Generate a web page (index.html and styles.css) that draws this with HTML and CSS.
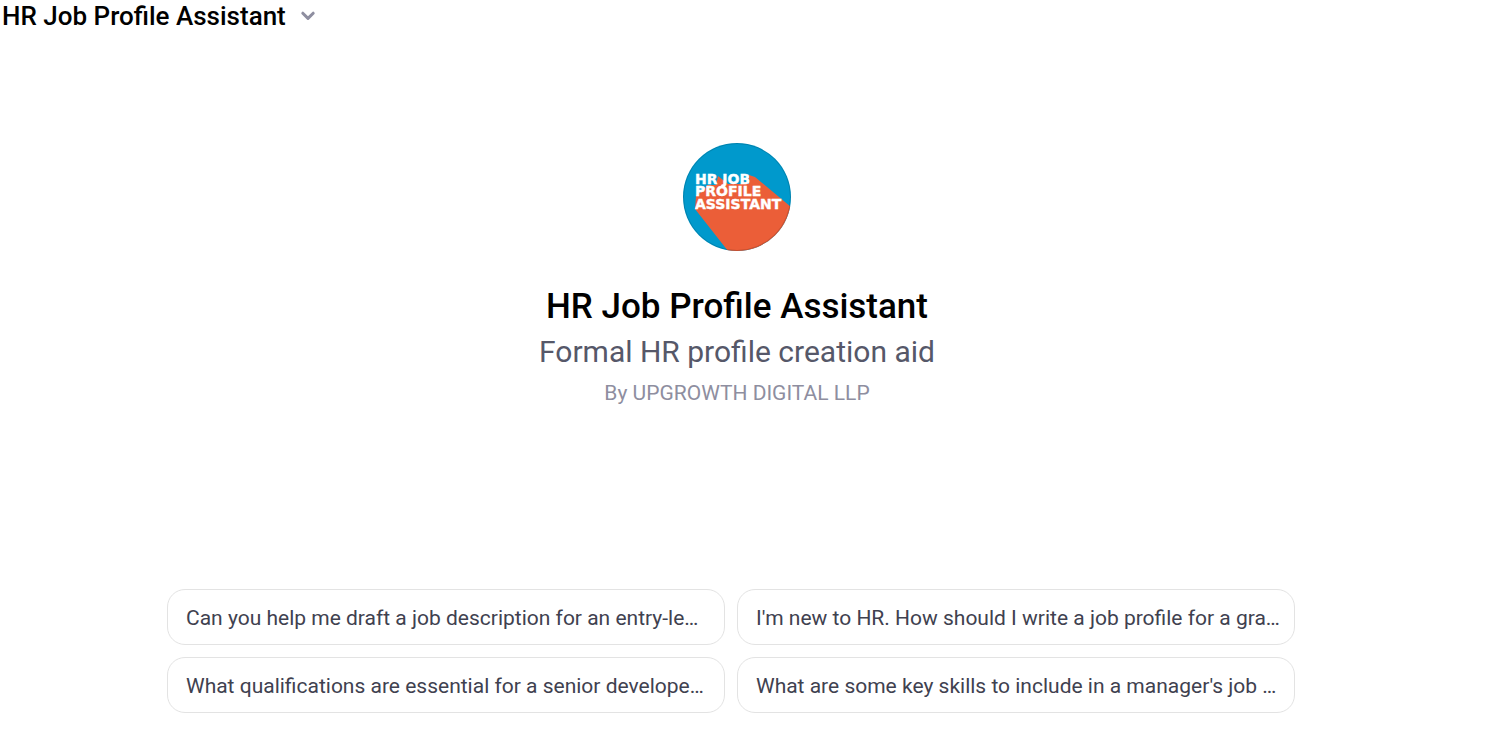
FILE: index.html
```html
<!DOCTYPE html>
<html lang="en">
<head>
    <meta charset="UTF-8">
    <meta name="viewport" content="width=device-width, initial-scale=1.0">
    <title>HR Job Profile Assistant</title>
    <link rel="stylesheet" href="styles.css">
</head>
<body>
    <header class="topbar">
        <button class="model-menu" type="button">
            HR Job Profile Assistant
            <svg class="chevron" viewBox="0 0 16 12" aria-hidden="true">
                <path d="M2.8 3.2L8 8.4L13.2 3.2" />
            </svg>
        </button>
    </header>

    <main class="hero">
        <svg class="avatar" viewBox="0 0 108 108" role="img" aria-label="HR Job Profile Assistant logo">
            <defs>
                <clipPath id="circle"><circle cx="54" cy="54" r="54" /></clipPath>
            </defs>
            <g clip-path="url(#circle)">
                <rect width="108" height="108" fill="#0099cc" />
                <path d="M12 66L45 108H108V64L72 34L66 32V41H45L35 33L33 42H24L22 46L13 53Z" fill="#eb5e38" />
            </g>
            <circle cx="54" cy="54" r="53.5" fill="none" stroke="#000" stroke-opacity="0.15" />
            <g class="avatar-text">
                <text x="12" y="41">HR JOB</text>
                <text x="12" y="53">PROFILE</text>
                <text x="12" y="66">ASSISTANT</text>
            </g>
        </svg>
        <h1>HR Job Profile Assistant</h1>
        <p class="description">Formal HR profile creation aid</p>
        <p class="author">By UPGROWTH DIGITAL LLP</p>
    </main>

    <footer class="footer">
        <div class="prompts">
            <button class="prompt" type="button">Can you help me draft a job description for an entry-le…</button>
            <button class="prompt" type="button">I'm new to HR. How should I write a job profile for a gra…</button>
            <button class="prompt" type="button">What qualifications are essential for a senior develope…</button>
            <button class="prompt" type="button">What are some key skills to include in a manager's job …</button>
        </div>
    </footer>
</body>
</html>
```
FILE: styles.css
```css
* {
    box-sizing: border-box;
}

body {
    display: flex;
    flex-direction: column;
    min-height: 100vh;
    margin: 0;
    padding-right: 15px;
    font-family: Roboto, "Liberation Sans", sans-serif;
    background-color: #fff;
    color: #000;
}

button {
    font-family: inherit;
    background: none;
    cursor: pointer;
}

.model-menu {
    display: flex;
    align-items: center;
    gap: 14px;
    padding: 0 2px;
    border: none;
    font-size: 26px;
    font-weight: 500;
    line-height: 32px;
    color: #000;
}

.chevron {
    width: 16px;
    height: 12px;
    fill: none;
    stroke: #8e8ea0;
    stroke-width: 3;
    stroke-linecap: round;
    stroke-linejoin: round;
}

.hero {
    display: flex;
    flex: 1;
    flex-direction: column;
    align-items: center;
    justify-content: center;
    padding-bottom: 66px;
    text-align: center;
}

.avatar {
    width: 108px;
    height: 108px;
    margin-bottom: 32px;
}

.avatar-text {
    font-family: "DejaVu Sans", sans-serif;
    font-size: 14px;
    font-weight: 700;
    fill: #fff;
    stroke: #fff;
    stroke-width: 0.4;
}

h1 {
    margin: 0;
    font-size: 35px;
    font-weight: 500;
    line-height: 48px;
}

.description {
    margin: 0;
    font-size: 30px;
    line-height: 42px;
    color: #565869;
}

.author {
    margin: 0;
    font-size: 21px;
    line-height: 40px;
    color: #8e8ea0;
}

.footer {
    padding: 0 12px 43px 0;
}

.prompts {
    display: grid;
    grid-template-columns: 1fr 1fr;
    gap: 12px;
    max-width: 1128px;
    margin: 0 auto;
}

.prompt {
    min-width: 0;
    height: 56px;
    padding: 2px 8px 0 18px;
    overflow: hidden;
    border: 1px solid #e3e3e3;
    border-radius: 18px;
    font-size: 21px;
    text-align: left;
    text-overflow: ellipsis;
    white-space: nowrap;
    color: #40414f;
}
```
